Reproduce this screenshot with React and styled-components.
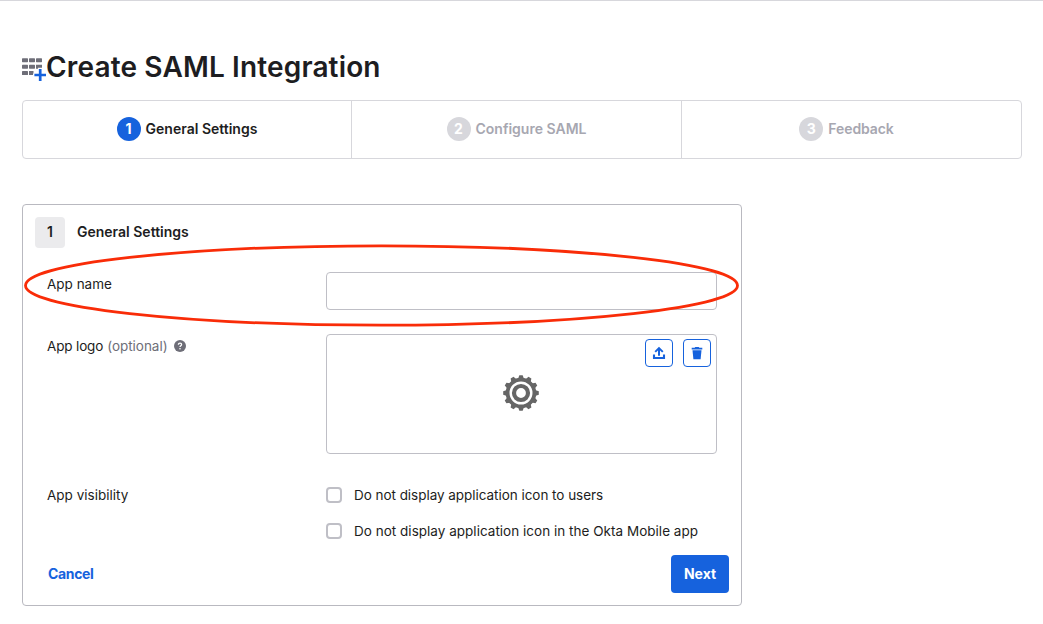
import React from 'react';
import styled, { createGlobalStyle } from 'styled-components';

const GlobalStyle = createGlobalStyle`
  * { box-sizing: border-box; }
  body {
    margin: 0;
    background: #fff;
    color: #1d1d21;
    font-family: Inter, "Liberation Sans", sans-serif;
    font-size: 14px;
    line-height: 20px;
  }
`;

const Page = styled.main`
  min-height: 624px;
  padding: 45px 21px 18px 22px;
  border-top: 1px solid #d7d7dc;
`;

const Header = styled.header`
  display: flex;
  height: 40px;
  margin-bottom: 14px;
`;

const AppsIcon = styled.svg`
  width: 25px;
  height: 24px;
  margin-top: 12px;
  margin-right: -1px;
`;

const Title = styled.h1`
  margin: 0;
  font-size: 28px;
  line-height: 42px;
  font-weight: 600;
  letter-spacing: 0.15px;
  white-space: nowrap;
`;

const Text = styled.span`
  letter-spacing: ${(p) => p.$track || 0}px;
  white-space: nowrap;
  color: ${(p) => (p.$muted ? '#6e6e78' : 'inherit')};
`;

const Steps = styled.ol`
  display: grid;
  grid-template-columns: 329px 330px 1fr;
  height: 59px;
  margin: 0 0 45px;
  padding: 0;
  list-style: none;
  border: 1px solid #d7d7dc;
  border-radius: 4px;
`;

const Step = styled.li`
  display: flex;
  align-items: center;
  justify-content: center;
  gap: 5px;
  padding-bottom: 1px;
  font-weight: 600;
  color: ${(p) => (p.$active ? '#1d1d21' : '#a7a7b1')};
  border-right: 1px solid #d7d7dc;
  &:last-child {
    padding-right: 10px;
    border-right: 0;
  }
`;

const StepNumber = styled.span`
  display: grid;
  place-items: center;
  width: 24px;
  height: 24px;
  border-radius: 50%;
  color: #fff;
  font-weight: 700;
  background: ${(p) => (p.$active ? '#1662dd' : '#d7d7dc')};
`;

const Panel = styled.section`
  position: relative;
  width: 720px;
  height: 402px;
  padding: 12px;
  border: 1px solid #b9b9c0;
  border-radius: 4px;
`;

const PanelHeader = styled.div`
  display: flex;
  align-items: center;
  gap: 12px;
  height: 31px;
  font-weight: 600;
`;

const Badge = styled.span`
  display: grid;
  place-items: center;
  width: 30px;
  height: 31px;
  padding-bottom: 2px;
  border-radius: 4px;
  background: #ebebed;
`;

const HeaderText = styled(Text)`
  padding-bottom: 2px;
`;

const Field = styled.div`
  display: grid;
  grid-template-columns: 279px 391px;
  padding-left: 12px;
  margin-top: ${(p) => p.$gap}px;
  font-size: 13.5px;
`;

const Label = styled.label`
  display: flex;
  align-items: center;
  gap: 4px;
  height: 24px;
`;

const HelpIcon = styled.svg`
  width: 12px;
  height: 12px;
  margin-left: 2px;
`;

const Input = styled.input`
  width: 100%;
  height: 38px;
  border: 1px solid #bfbfc6;
  border-radius: 4px;
  background: #fff;
  padding: 0 10px;
  font: inherit;
`;

const LogoBox = styled.div`
  position: relative;
  display: grid;
  place-items: center;
  height: 120px;
  padding: 0 2px 2px 0;
  border: 1px solid #bfbfc6;
  border-radius: 4px;
`;

const LogoActions = styled.div`
  position: absolute;
  top: 4px;
  right: 5px;
  display: flex;
  gap: 10px;
`;

const IconButton = styled.button`
  display: grid;
  place-items: center;
  width: 28px;
  height: 28px;
  padding: 0;
  border: 1px solid #1662dd;
  border-radius: 4px;
  background: #fff;
  color: #1662dd;
`;

const CheckList = styled.div`
  display: flex;
  flex-direction: column;
  gap: 12px;
`;

const CheckLabel = styled.label`
  display: flex;
  align-items: center;
  gap: 12px;
  height: 24px;
`;

const Checkbox = styled.input`
  appearance: none;
  width: 16px;
  height: 16px;
  margin: 0;
  border: 2px solid #bfbfc6;
  border-radius: 4px;
  background: #fff;
`;

const Footer = styled.footer`
  display: flex;
  align-items: center;
  justify-content: space-between;
  height: 38px;
  margin-top: 12px;
  padding-left: 13px;
`;

const Cancel = styled.a`
  color: #1662dd;
  font-weight: 700;
`;

const NextButton = styled.button`
  width: 58px;
  height: 38px;
  padding: 0;
  border: 0;
  border-radius: 4px;
  background: #1662dd;
  color: #fff;
  font: inherit;
  font-weight: 700;
`;

const Highlight = styled.svg`
  position: absolute;
  left: 0;
  top: 36px;
  width: 718px;
  height: 90px;
  pointer-events: none;
`;

const Gear = () => (
  <svg width="38" height="38" viewBox="-19 -19 38 38">
    <g fill="#666">
      {Array.from({ length: 12 }, (_, i) => (
        <path key={i} d="M-3 -14L-1.7 -17.8H1.7L3 -14Z" transform={`rotate(${i * 30})`} />
      ))}
    </g>
    <circle r="13.4" fill="none" stroke="#666" strokeWidth="3.8" />
    <circle r="7" fill="none" stroke="#666" strokeWidth="4.2" />
  </svg>
);

const steps = [
  { label: 'General Settings', track: 0, active: true },
  { label: 'Configure SAML', track: 0 },
  { label: 'Feedback', track: -0.1 },
];

export default function App() {
  return (
    <>
      <GlobalStyle />
      <Page>
        <Header>
          <AppsIcon viewBox="0 0 25 24">
            <g fill="#6e6e78">
              <rect x="0" y="0.2" width="6" height="4" rx=".6" />
              <rect x="7" y="0.2" width="6" height="4" rx=".6" />
              <rect x="14" y="0.2" width="6" height="4" rx=".6" />
              <rect x="0" y="6.7" width="6" height="4" rx=".6" />
              <rect x="7" y="6.7" width="6" height="4" rx=".6" />
              <path d="M14 6.7h6v3h-4v1h-2z" />
              <rect x="0" y="13" width="6" height="4" rx=".6" />
              <path d="M7 13h4.5v2.5h-.5v1.5H7z" />
            </g>
            <path d="M18.2 11v12M12.4 17h11.6" stroke="#1662dd" strokeWidth="2.7" />
          </AppsIcon>
          <Title>Create SAML Integration</Title>
        </Header>

        <Steps>
          {steps.map((s, i) => (
            <Step key={s.label} $active={s.active}>
              <StepNumber $active={s.active}>{i + 1}</StepNumber>
              <Text $track={s.track}>{s.label}</Text>
            </Step>
          ))}
        </Steps>

        <Panel>
          <PanelHeader>
            <Badge>1</Badge>
            <HeaderText>General Settings</HeaderText>
          </PanelHeader>

          <Field $gap={24}>
            <Label><Text>App name</Text></Label>
            <Input />
          </Field>

          <Field $gap={24}>
            <Label>
              <Text $track={-0.15}>App logo</Text>
              <Text $muted $track={-0.03}>(optional)</Text>
              <HelpIcon viewBox="0 0 12 12">
                <circle cx="6" cy="6" r="6" fill="#6e6e78" />
                <path d="M4.4 4.7C4.4 2.6 7.6 2.7 7.6 4.6C7.6 5.8 6 5.7 6 7" fill="none" stroke="#fff" strokeWidth="1.3" />
                <circle cx="6" cy="8.8" r=".8" fill="#fff" />
              </HelpIcon>
            </Label>
            <LogoBox>
              <Gear />
              <LogoActions>
                <IconButton>
                  <svg width="14" height="14" viewBox="0 0 14 14" fill="none" stroke="currentColor" strokeWidth="2.1">
                    <path d="M2 8.4V12H12V8.4" />
                    <path d="M7 9.8V2.5M3.2 5.9L7 2.1L10.8 5.9" strokeWidth="2" />
                  </svg>
                </IconButton>
                <IconButton>
                  <svg width="14" height="14" viewBox="0 0 14 14" fill="currentColor">
                    <path d="M1.7 1.8H4.6L5.3 .9H8.7L9.4 1.8H12.3V3.5H1.7Z" />
                    <path d="M2.5 4.3H11.5L10.6 13.2H3.4Z" />
                  </svg>
                </IconButton>
              </LogoActions>
            </LogoBox>
          </Field>

          <Field $gap={29}>
            <Label><Text>App visibility</Text></Label>
            <CheckList>
              <CheckLabel>
                <Checkbox type="checkbox" />
                <Text $track={-0.04}>Do not display application icon to users</Text>
              </CheckLabel>
              <CheckLabel>
                <Checkbox type="checkbox" />
                <Text $track={0.02}>Do not display application icon in the Okta Mobile app</Text>
              </CheckLabel>
            </CheckList>
          </Field>

          <Footer>
            <Cancel><Text $track={-0.35}>Cancel</Text></Cancel>
            <NextButton><Text>Next</Text></NextButton>
          </Footer>

          <Highlight viewBox="0 0 718 90">
            <ellipse cx="358.5" cy="44.5" rx="356" ry="39.7" fill="none" stroke="#f92c08" strokeWidth="2.8" />
          </Highlight>
        </Panel>
      </Page>
    </>
  );
}
